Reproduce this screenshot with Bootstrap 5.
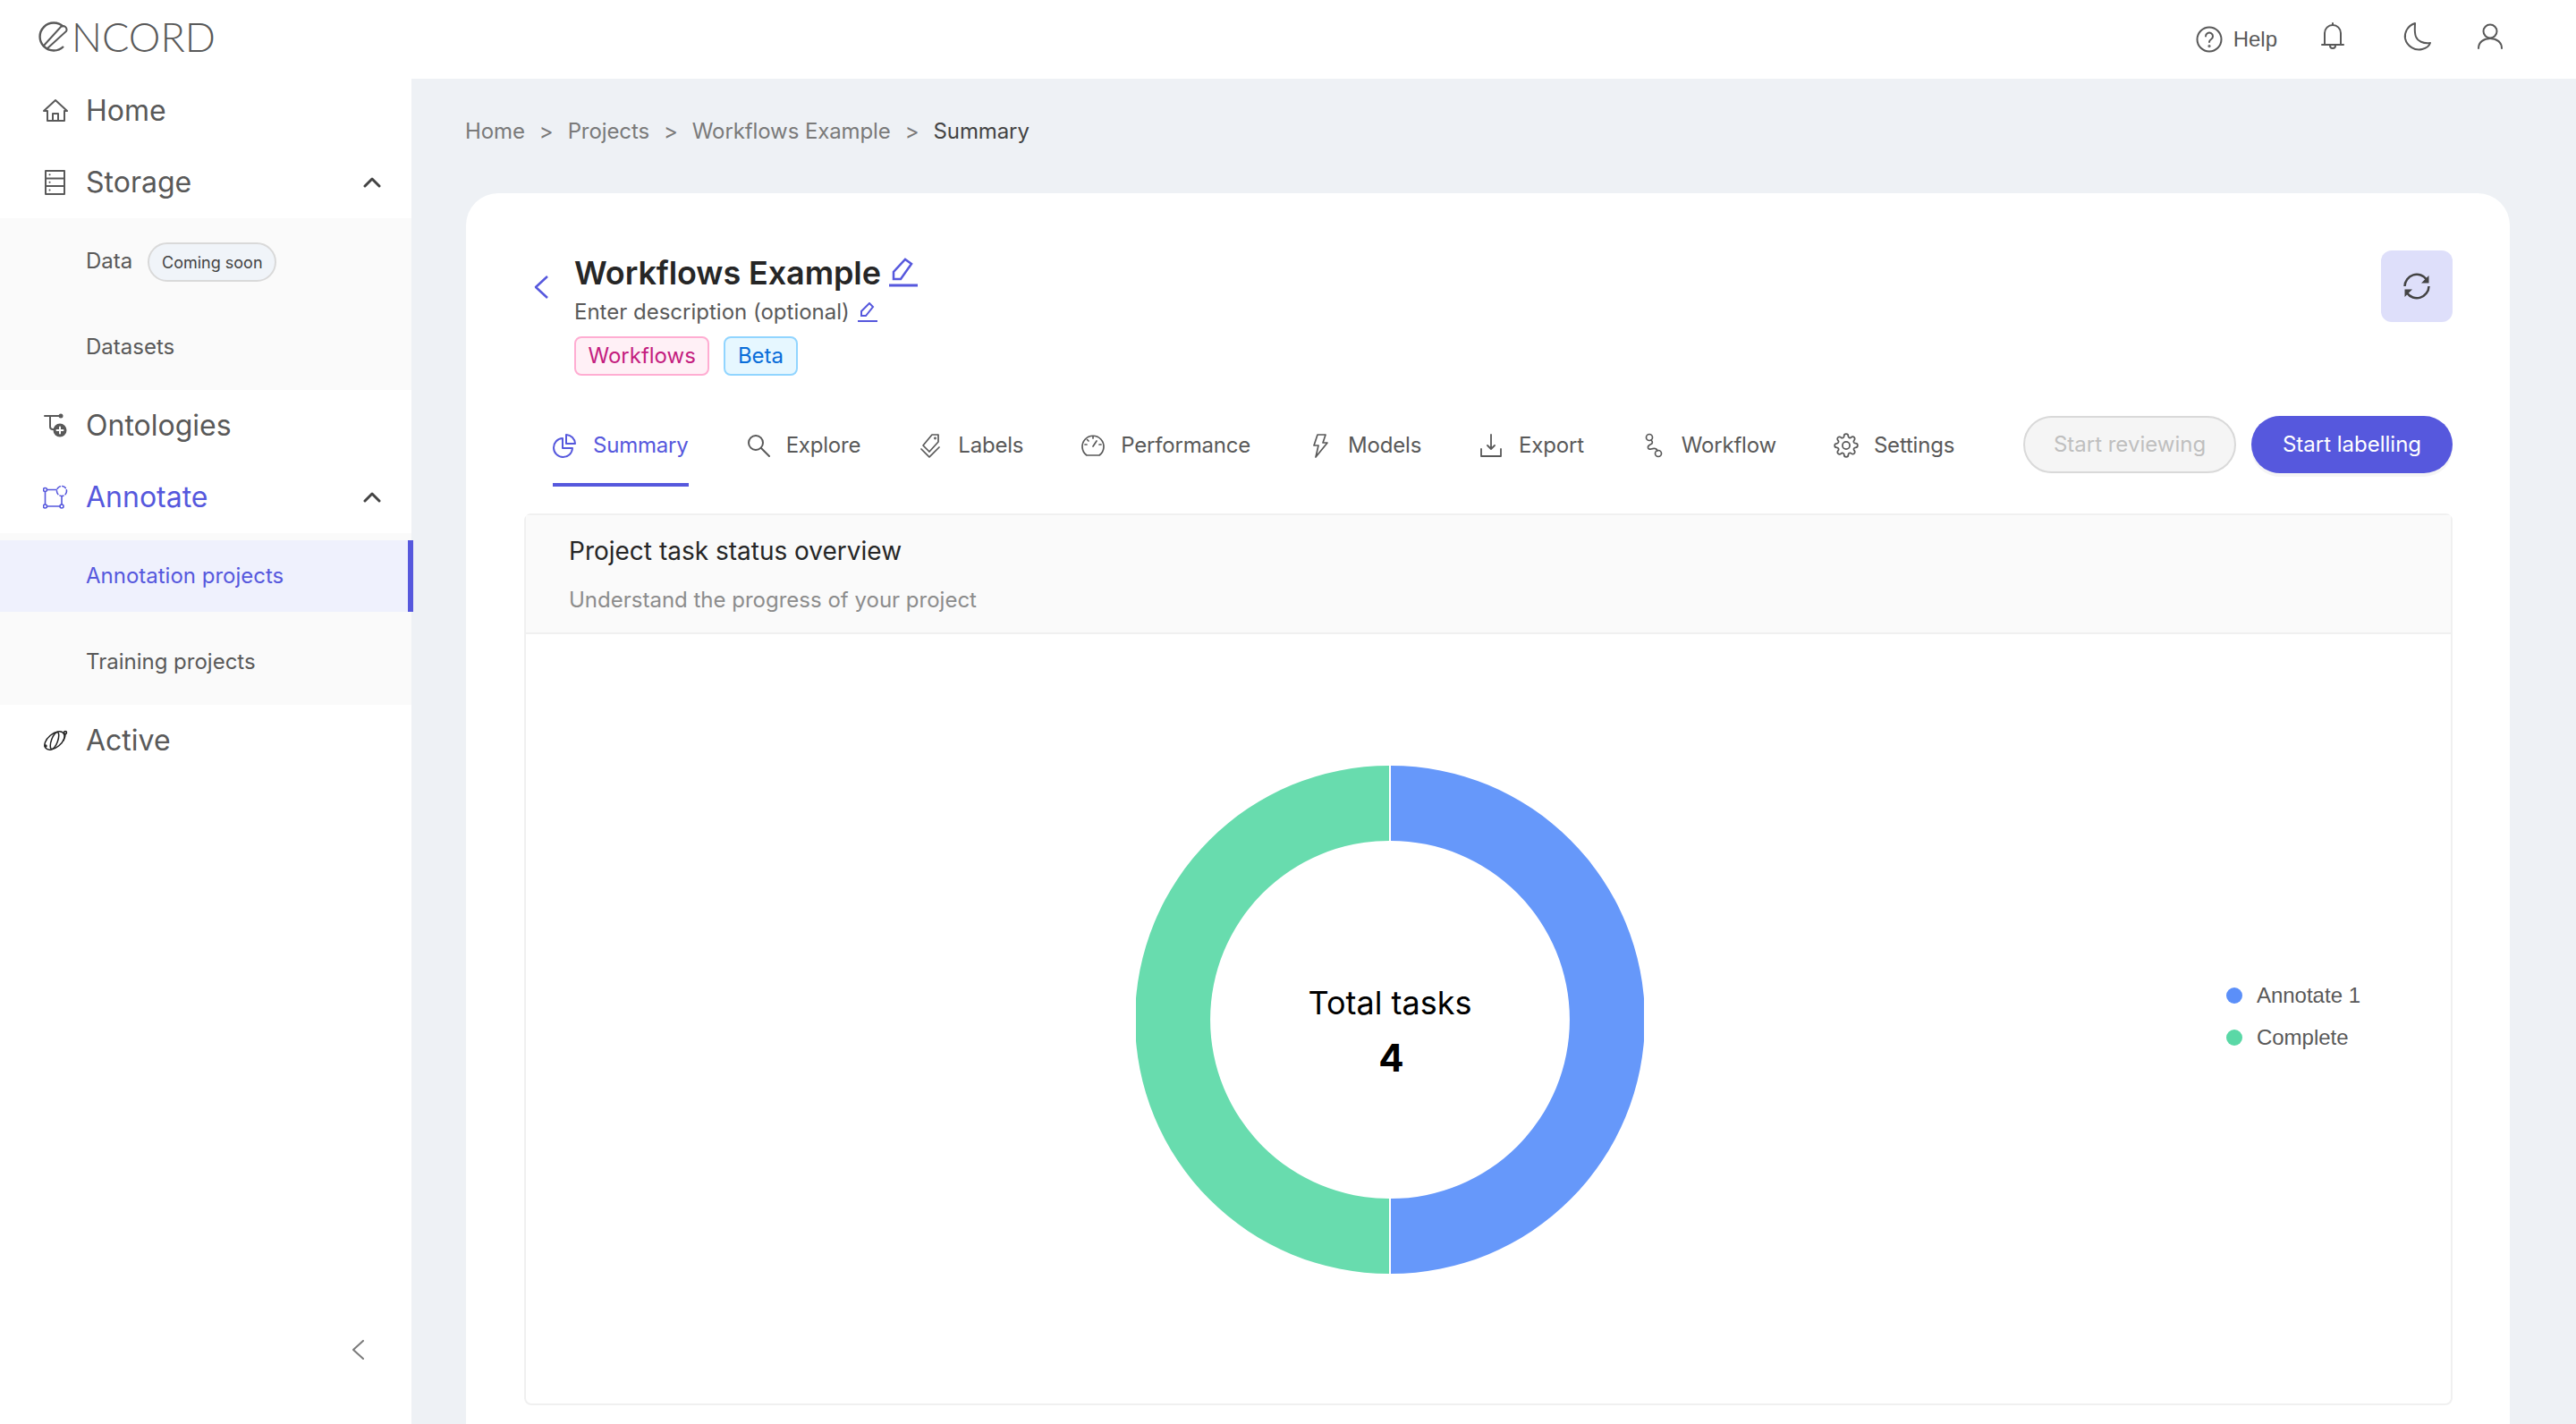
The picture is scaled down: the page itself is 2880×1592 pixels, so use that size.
<!DOCTYPE html>
<html lang="en">
<head>
  <meta charset="UTF-8" />
  <title>Encord - Workflows Example</title>
  <link rel="stylesheet" href="https://cdn.jsdelivr.net/npm/bootstrap@5.3.3/dist/css/bootstrap.min.css" />
  <style>
    html, body { height: 100%; }
    body { font-family: Inter, "Liberation Sans", sans-serif; color: #595959; background: #fff; overflow: hidden; }
    svg { display: block; flex: none; }
    .stroke-icon { fill: none; stroke: currentColor; stroke-width: 2; stroke-linecap: round; stroke-linejoin: round; }

    .top-bar { height: 88px; padding: 0 0 0 43px; background: #fff; }
    .logo-wrap { margin-bottom: 6px; }
    .logo-text { font-family: Lato, "Liberation Sans", sans-serif; font-weight: 300; font-size: 45px; line-height: 1; letter-spacing: 0; color: #595959; margin-left: 4px; }
    .top-actions { font-family: "Liberation Sans", sans-serif; font-size: 24px; }
    .help-icon { width: 30px; height: 30px; margin-right: 12px; }
    .bell-icon { width: 26px; height: 34px; margin-left: 49px; margin-bottom: 6px; }
    .moon-icon { width: 32px; height: 34px; margin-left: 66px; margin-bottom: 6px; }
    .user-icon { width: 30px; height: 30px; margin-left: 50px; margin-right: 81px; margin-bottom: 6px; }

    .page-body { height: 1504px; }
    .side-bar { width: 460px; flex: none; background: #fff; position: relative; z-index: 1; }
    .side-menu { margin-top: -4px; }
    .menu-top { height: 80px; padding: 0 34px 0 48px; font-size: 32px; color: #595959; gap: 20px; }
    .menu-top svg.menu-icon { width: 28px; height: 28px; }
    .menu-top.is-open { color: #5658dd; }
    .menu-chevron { width: 20px; height: 12px; margin-left: auto; color: #434343; }
    .sub-menu { background: #fafafa; padding: 8px 0; gap: 16px; }
    .sub-item { height: 80px; padding-left: 96px; font-size: 24px; color: #595959; }
    .sub-item.is-current { background: #eff1fd; color: #5658dd; border-right: 6px solid #5658dd; margin-right: -2px; }
    .soon-pill { font-size: 18px; height: 44px; width: 144px; margin-left: 17px; margin-top: 2px; border: 2px solid #d9d9d9; border-radius: 22px; background: #f0f4f9; color: #434343; }
    .collapse-arrow { width: 14px; height: 22px; color: #7a7a7a; margin: auto 0 72px 393px; }

    .main-area { background: #eef1f5; min-width: 0; padding: 0 74px 0 61px; }
    .crumbs { height: 128px; font-size: 24px; letter-spacing: -.1px; color: #7a7a7a; gap: 16px; margin-left: -1px; padding-bottom: 10px; }
    .crumbs .crumb-now { color: #434343; }
    .project-card { border: 0; border-radius: 36px; padding: 64px 64px 40px 65px; height: 1500px; }
    .back-arrow { width: 18px; height: 28px; color: #5658dd; margin: 27px 0 0 10px; stroke-width: 2.500; }
    .title-block { margin-left: 28px; }
    .project-title { font-size: 36px; font-weight: 600; line-height: 50px; letter-spacing: -.1px; color: #262626; margin: 0; }
    .project-desc { font-size: 24px; line-height: 38px; color: #595959; }
    .edit-big { width: 32px; height: 33px; margin: 0 0 2px 9px; color: #5658dd; }
    .edit-small { width: 22px; height: 22px; margin-left: 9px; color: #5658dd; }
    .chip-row { gap: 16px; margin-top: 8px; }
    .chip-pink, .chip-blue { font-size: 24px; height: 44px; border-radius: 8px; border: 2px solid; padding: 0 13.500px; }
    .chip-pink { background: #fff0f6; border-color: #ffadd2; color: #c41d7f; }
    .chip-blue { background: #e6f7ff; border-color: #91d5ff; color: #096dd9; }
    .refresh-btn { width: 80px; height: 80px; background: #dedffa; border: 0; border-radius: 12px; padding: 0; color: #434343; }

    .tab-row { margin-top: 32px; margin-bottom: 30px; padding-left: 32px; }
    .tab-list { gap: 64px; flex-wrap: nowrap; }
    .tab-link { height: 92px; padding: 4px 0 0; gap: 17px; font-size: 24px; letter-spacing: -.2px; color: #595959; border-bottom: 4px solid transparent; }
    .tab-link svg { width: 28px; height: 28px; }
    .tab-link.is-current { color: #5658dd; border-bottom-color: #5658dd; }
    .pill-btn { height: 64px; border-radius: 32px; font-size: 24px; padding: 0; margin-top: 13px; }
    .pill-off.btn:disabled { width: 238px; background: #f5f5f5; border: 2px solid #d9d9d9; color: #bfbfbf; margin-right: 17px; opacity: 1; }
    .pill-on { width: 225px; background: #5658dd; border: 0; color: #fff; box-shadow: 0 4px 0 rgba(0, 0, 0, .04); }

    .status-panel { border: 2px solid #f0f0f0; border-radius: 8px; height: 997px; }
    .status-head { background: #fafafa; border-bottom: 2px solid #f0f0f0; height: 133px; padding: 0 0 0 48px; }
    .status-title { font-size: 28px; line-height: 40px; color: #262626; margin: 0 0 19px; font-weight: 400; }
    .status-sub { font-size: 24px; line-height: 32px; color: #8c8c8c; }
    .status-body { padding: 0 101px 0 682px; }
    .donut-box { width: 568px; height: 568px; position: relative; flex: none; margin-top: 2px; }
    .donut-text { inset: 0; color: #000; padding-top: 26px; }
    .donut-label { font-size: 36px; line-height: 44px; }
    .donut-value { font-size: 42px; line-height: 48px; font-weight: 700; margin-top: 16px; margin-left: 3px; }
    .legend-list { margin-left: auto; margin-bottom: 5px; font-family: "Liberation Sans", sans-serif; font-size: 24px; gap: 19px; color: #595959; }
    .legend-row { line-height: 28px; gap: 16px; }
    .legend-dot { width: 18px; height: 18px; border-radius: 50%; }
    .dot-blue { background: #5b8ff9; }
    .dot-green { background: #5ad8a6; }
  </style>
</head>
<body>
  <header class="top-bar navbar flex-nowrap justify-content-between">
    <div class="logo-wrap d-flex align-items-center">
      <svg width="33" height="34" viewBox="0 0 33 34" fill="none" stroke="#595959" stroke-width="2.400">
        <path d="M28 6A15.500 15.500 0 1 0 28 28" />
        <path d="M5 28 25 6a4 4 0 0 1 6 5L9 31" stroke-width="2" />
      </svg>
      <span class="logo-text">NCORD</span>
    </div>
    <div class="top-actions d-flex align-items-center">
      <svg class="help-icon stroke-icon" viewBox="0 0 30 30"><circle cx="15" cy="15" r="13.500" /><path d="M11 11.500a4 4 0 1 1 6 3.500c-1.300.8-2 1.500-2 3" /><circle cx="15" cy="22.500" r=".6" /></svg>
      <span>Help</span>
      <svg class="bell-icon stroke-icon" viewBox="0 0 26 34"><path d="M1 26h24M4 26V13a9 9 0 0 1 18 0v13M13 2v2M10 27a3 3 0 0 0 6 0" /></svg>
      <svg class="moon-icon stroke-icon" viewBox="0 0 32 34"><path d="M13 2C4 5 1 13 2 19c2 9 11 14 19 12 4-1 8-4 9-7-8 1-14-2-16-7-2-5-1-11-1-15Z" /></svg>
      <svg class="user-icon stroke-icon" viewBox="0 0 30 30"><circle cx="15" cy="9" r="7.500" /><path d="M2 28c0-7 6-11 13-11s13 4 13 11" /></svg>
    </div>
  </header>

  <div class="page-body d-flex">
    <aside class="side-bar d-flex flex-column">
      <nav class="side-menu d-flex flex-column">
        <a class="menu-top d-flex align-items-center text-decoration-none" href="#">
          <svg class="menu-icon stroke-icon" viewBox="0 0 28 28"><path d="M1 14 14 2l13 12h-3v11H5V14Z" /><path d="M11 25v-8h6v8" /></svg>
          Home
        </a>
        <a class="menu-top d-flex align-items-center text-decoration-none" href="#">
          <svg class="menu-icon stroke-icon" viewBox="0 0 28 28"><path d="M3 1h21v26H3ZM3 9.500h21M3 18h21" stroke-linecap="butt" /><path d="M7.500 5.200h.1M7.500 13.700h.1M7.500 22.500h.1" /></svg>
          Storage
          <svg class="menu-chevron stroke-icon" viewBox="0 0 20 12" style="stroke-width:3"><path d="M2 10l8-8 8 8" /></svg>
        </a>
        <div class="sub-menu d-flex flex-column">
          <a class="sub-item d-flex align-items-center text-decoration-none" href="#">
            Data
            <span class="soon-pill d-inline-flex align-items-center justify-content-center">Coming soon</span>
          </a>
          <a class="sub-item d-flex align-items-center text-decoration-none" href="#">Datasets</a>
        </div>
        <a class="menu-top d-flex align-items-center text-decoration-none" href="#">
          <svg class="menu-icon stroke-icon" viewBox="0 0 28 28"><path d="M2 3h18M8 3v12a3 3 0 0 0 3 3h5" /><circle cx="20" cy="3" r="2.500" fill="currentColor" stroke="none" /><circle cx="19" cy="19" r="7.500" fill="currentColor" stroke="none" /><path d="M19 15.500v7M15.500 19h7" stroke="#fff" /></svg>
          Ontologies
        </a>
        <a class="menu-top is-open d-flex align-items-center text-decoration-none" href="#">
          <svg class="menu-icon stroke-icon" viewBox="0 0 28 28" style="stroke-width:1.600"><path d="M5 5.500h10M2.500 8v13.500M5 24h14M21 13v9" /><circle cx="2.500" cy="5.500" r="2" /><circle cx="2.500" cy="24" r="2" /><circle cx="21" cy="24" r="2" /><circle cx="21" cy="7" r="5.500" stroke-dasharray="4 2.500" /></svg>
          Annotate
          <svg class="menu-chevron stroke-icon" viewBox="0 0 20 12" style="stroke-width:3;color:#434343"><path d="M2 10l8-8 8 8" /></svg>
        </a>
        <div class="sub-menu d-flex flex-column">
          <a class="sub-item is-current d-flex align-items-center text-decoration-none" href="#">Annotation projects</a>
          <a class="sub-item d-flex align-items-center text-decoration-none" href="#">Training projects</a>
        </div>
        <a class="menu-top d-flex align-items-center text-decoration-none" href="#">
          <svg class="menu-icon stroke-icon" viewBox="0 0 28 28" style="color:#222;stroke-width:1.500"><ellipse cx="13" cy="14" rx="13" ry="7.500" transform="rotate(-40 13 14)" /><ellipse cx="13" cy="14" rx="10" ry="3.500" transform="rotate(-70 13 14)" /><circle cx="25" cy="5" r="1.500" /><path d="M25 7c0 3-1 5-2 7" /><circle cx="3" cy="20" r="1" /></svg>
          Active
        </a>
      </nav>
      <svg class="collapse-arrow stroke-icon" viewBox="0 0 14 22"><path d="M13 1 2 11l11 10" /></svg>
    </aside>

    <main class="main-area flex-grow-1">
      <nav class="crumbs d-flex align-items-center">
        <span>Home</span><span>&gt;</span><span>Projects</span><span>&gt;</span><span>Workflows Example</span><span>&gt;</span><span class="crumb-now">Summary</span>
      </nav>

      <section class="project-card card">
        <div class="d-flex justify-content-between align-items-start">
          <div class="d-flex align-items-start">
            <svg class="back-arrow stroke-icon" viewBox="0 0 18 28"><path d="M16 2 3 14l13 12" stroke-linecap="butt" /></svg>
            <div class="title-block">
              <div class="d-flex align-items-center">
                <h1 class="project-title">Workflows Example</h1>
                <svg class="edit-big stroke-icon" viewBox="0 0 32 33" style="stroke-width:2.500"><path d="M5 24v-8L18 2l7 5-12 17Z" stroke-linejoin="miter" /><path d="M0 31h32" stroke-width="3" /></svg>
              </div>
              <div class="project-desc d-flex align-items-center">
                Enter description (optional)
                <svg class="edit-small stroke-icon" viewBox="0 0 22 22"><path d="M4 15v-5L13 1l4 4-8 10Z" stroke-linejoin="miter" /><path d="M0 21h22" /></svg>
              </div>
              <div class="chip-row d-flex">
                <span class="chip-pink d-inline-flex align-items-center">Workflows</span>
                <span class="chip-blue d-inline-flex align-items-center">Beta</span>
              </div>
            </div>
          </div>
          <button class="refresh-btn btn d-flex align-items-center justify-content-center" type="button" aria-label="Refresh">
            <svg width="30" height="30" viewBox="0 0 30 30" fill="none" stroke="currentColor" stroke-width="2.500"><path d="M1.500 15A13.500 13.500 0 0 1 26 7.500" /><path d="M28.500 15A13.500 13.500 0 0 1 4 22.500" /><path d="M28.500 3v8.500H20Z" fill="currentColor" stroke="none" /><path d="M1.500 27v-8.500H10Z" fill="currentColor" stroke="none" /></svg>
          </button>
        </div>

        <div class="tab-row d-flex justify-content-between align-items-start">
          <ul class="tab-list nav">
            <li class="nav-item"><a class="tab-link is-current nav-link d-flex align-items-center" href="#">
              <svg class="stroke-icon" viewBox="0 0 28 28"><path d="M11 6a10.500 10.500 0 1 0 11 11H11Z" /><path d="M15 2a10.500 10.500 0 0 1 10 10H15Z" /></svg>Summary</a></li>
            <li class="nav-item"><a class="tab-link nav-link d-flex align-items-center" href="#">
              <svg class="stroke-icon" viewBox="0 0 28 28"><circle cx="11" cy="11" r="8" /><path d="m17 17 9 9" /></svg>Explore</a></li>
            <li class="nav-item"><a class="tab-link nav-link d-flex align-items-center" href="#">
              <svg class="stroke-icon" viewBox="0 0 28 28" style="stroke-width:1.700"><path d="M16 2h7v8L13 21l-7-7Z" /><path d="m4 18 9 9 11-11" /><circle cx="19.500" cy="6" r=".6" /></svg>Labels</a></li>
            <li class="nav-item"><a class="tab-link nav-link d-flex align-items-center" href="#">
              <svg class="stroke-icon" viewBox="0 0 28 28" style="stroke-width:1.700"><path d="M7 25a12 12 0 1 1 14 0Z" /><path d="m14 15 4-6M14 4v2M5 13h2M21 13h2M7.500 7.500 9 9" /></svg>Performance</a></li>
            <li class="nav-item"><a class="tab-link nav-link d-flex align-items-center" href="#">
              <svg class="stroke-icon" viewBox="0 0 28 28" style="stroke-width:1.700"><path d="M11 2h9l-3 9h5L9 27l3-13H7Z" /></svg>Models</a></li>
            <li class="nav-item"><a class="tab-link nav-link d-flex align-items-center" href="#">
              <svg class="stroke-icon" viewBox="0 0 28 28" style="stroke-width:1.800"><path d="M14 2v16M10 14l4 4 4-4M3 18v8h22v-8" /></svg>Export</a></li>
            <li class="nav-item"><a class="tab-link nav-link d-flex align-items-center" href="#">
              <svg class="stroke-icon" viewBox="0 0 28 28" style="stroke-width:1.700"><circle cx="9" cy="5" r="3.500" /><circle cx="19" cy="23" r="3.500" /><path d="M11 8c2 2 2 4-1 5-4 2-3 6 1 5 3-1 6-1 7 2" /></svg>Workflow</a></li>
            <li class="nav-item"><a class="tab-link nav-link d-flex align-items-center" href="#">
              <svg class="stroke-icon" viewBox="0 0 24 24" style="stroke-width:1.500"><circle cx="12" cy="12" r="3.500" /><path d="M19.400 15a1.650 1.650 0 0 0 .33 1.820l.06.06a2 2 0 0 1 0 2.830 2 2 0 0 1-2.830 0l-.06-.06a1.650 1.650 0 0 0-1.820-.33 1.650 1.650 0 0 0-1 1.510V21a2 2 0 0 1-2 2 2 2 0 0 1-2-2v-.09A1.650 1.650 0 0 0 9 19.400a1.650 1.650 0 0 0-1.820.33l-.06.06a2 2 0 0 1-2.830 0 2 2 0 0 1 0-2.830l.06-.06a1.650 1.650 0 0 0 .33-1.820 1.650 1.650 0 0 0-1.510-1H3a2 2 0 0 1-2-2 2 2 0 0 1 2-2h.09A1.650 1.650 0 0 0 4.600 9a1.650 1.650 0 0 0-.33-1.820l-.06-.06a2 2 0 0 1 0-2.830 2 2 0 0 1 2.830 0l.06.06a1.650 1.650 0 0 0 1.820.33H9a1.650 1.650 0 0 0 1-1.510V3a2 2 0 0 1 2-2 2 2 0 0 1 2 2v.09a1.650 1.650 0 0 0 1 1.510 1.650 1.650 0 0 0 1.820-.33l.06-.06a2 2 0 0 1 2.830 0 2 2 0 0 1 0 2.830l-.06.06a1.650 1.650 0 0 0-.33 1.820V9a1.650 1.650 0 0 0 1.510 1H21a2 2 0 0 1 2 2 2 2 0 0 1-2 2h-.09a1.650 1.650 0 0 0-1.510 1z" /></svg>Settings</a></li>
          </ul>
          <div class="d-flex">
            <button class="pill-btn pill-off btn" type="button" disabled>Start reviewing</button>
            <button class="pill-btn pill-on btn" type="button">Start labelling</button>
          </div>
        </div>

        <div class="status-panel card">
          <div class="status-head d-flex flex-column justify-content-center">
            <h2 class="status-title">Project task status overview</h2>
            <div class="status-sub">Understand the progress of your project</div>
          </div>
          <div class="status-body d-flex align-items-center flex-grow-1">
            <div class="donut-box">
              <svg width="568" height="568" viewBox="0 0 568 568">
                <path d="M285 0A284 284 0 0 1 285 568V484A200 200 0 0 0 285 84Z" fill="#6698fa" />
                <path d="M283 0A284 284 0 0 0 283 568V484A200 200 0 0 1 283 84Z" fill="#68dcae" />
              </svg>
              <div class="donut-text position-absolute d-flex flex-column align-items-center justify-content-center">
                <div class="donut-label">Total tasks</div>
                <div class="donut-value">4</div>
              </div>
            </div>
            <div class="legend-list d-flex flex-column">
              <div class="legend-row d-flex align-items-center"><span class="legend-dot dot-blue"></span>Annotate 1</div>
              <div class="legend-row d-flex align-items-center"><span class="legend-dot dot-green"></span>Complete</div>
            </div>
          </div>
        </div>
      </section>
    </main>
  </div>

  <script src="https://cdn.jsdelivr.net/npm/bootstrap@5.3.3/dist/js/bootstrap.bundle.min.js"></script>
</body>
</html>
